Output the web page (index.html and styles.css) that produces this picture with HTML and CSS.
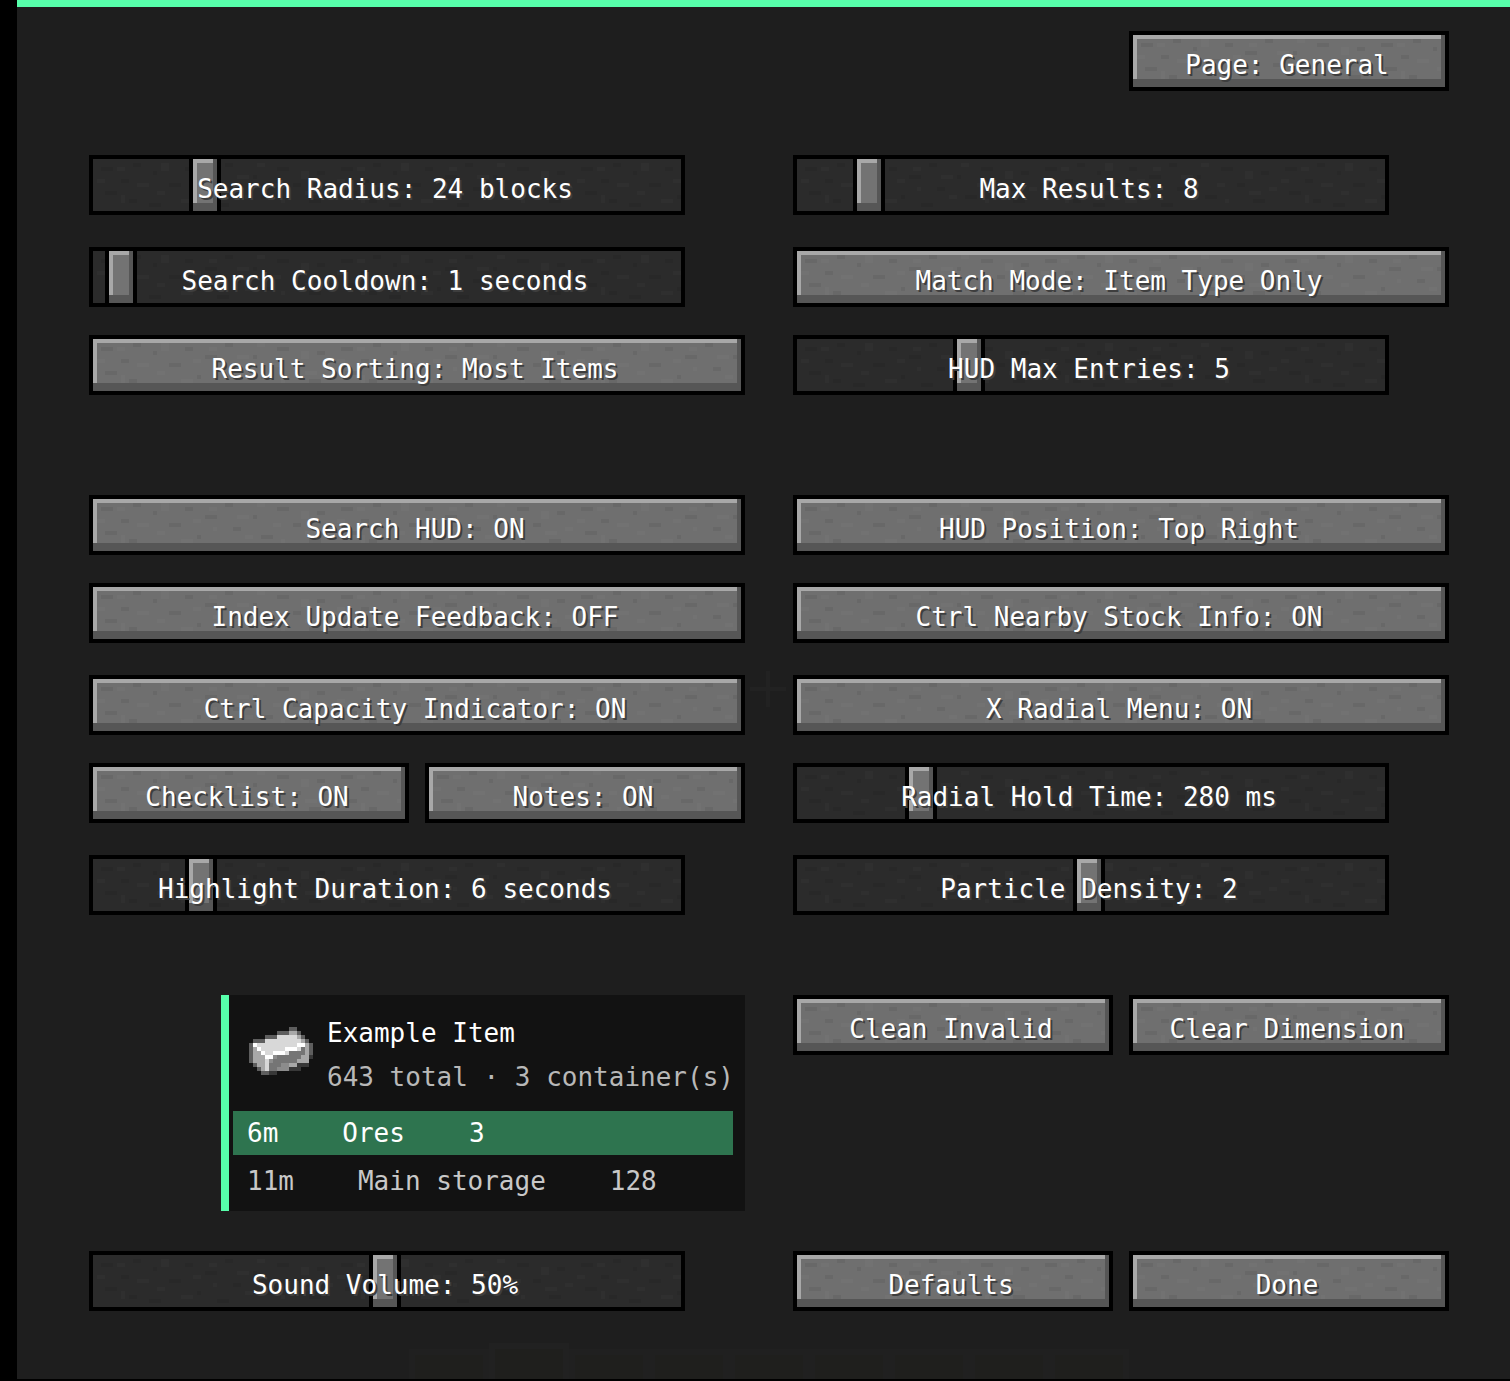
FILE: index.html
```html
<!DOCTYPE html>
<html lang="en">
<head>
<meta charset="utf-8">
<title>Settings</title>
<link rel="stylesheet" href="styles.css">
</head>
<body>
<main class="panel">
  <div class="crosshair" aria-hidden="true"></div>
  <div class="hotbar" aria-hidden="true"><i></i><i class="selected"></i><i></i><i></i><i></i><i></i><i></i><i></i><i></i></div>

  <header class="toolbar"><button class="btn" type="button">Page: General</button></header>

  <section class="group group-search">
    <div class="slider"><input type="range" id="radius" min="0" max="141" value="25" aria-valuetext="24 blocks"><label for="radius">Search Radius: 24 blocks</label></div>
    <div class="slider"><input type="range" id="results" min="0" max="141" value="15" aria-valuetext="8"><label for="results">Max Results: 8</label></div>
    <div class="slider"><input type="range" id="cooldown" min="0" max="141" value="4" aria-valuetext="1 seconds"><label for="cooldown">Search Cooldown: 1 seconds</label></div>
    <button class="btn" type="button">Match Mode: Item Type Only</button>
    <button class="btn" type="button">Result Sorting: Most Items</button>
    <div class="slider"><input type="range" id="entries" min="0" max="141" value="40" aria-valuetext="5"><label for="entries">HUD Max Entries: 5</label></div>
  </section>

  <section class="group group-display">
    <button class="btn" type="button">Search HUD: ON</button>
    <button class="btn" type="button">HUD Position: Top Right</button>
    <button class="btn" type="button">Index Update Feedback: OFF</button>
    <button class="btn" type="button">Ctrl Nearby Stock Info: ON</button>
    <button class="btn" type="button">Ctrl Capacity Indicator: ON</button>
    <button class="btn" type="button">X Radial Menu: ON</button>
    <div class="pair">
      <button class="btn" type="button">Checklist: ON</button>
      <button class="btn" type="button">Notes: ON</button>
    </div>
    <div class="slider"><input type="range" id="hold" min="0" max="141" value="28" aria-valuetext="280 ms"><label for="hold">Radial Hold Time: 280 ms</label></div>
    <div class="slider"><input type="range" id="highlight" min="0" max="141" value="24" aria-valuetext="6 seconds"><label for="highlight">Highlight Duration: 6 seconds</label></div>
    <div class="slider"><input type="range" id="density" min="0" max="141" value="70" aria-valuetext="2"><label for="density">Particle Density: 2</label></div>
  </section>

  <section class="group group-preview">
    <article class="preview">
      <div class="preview-head">
        <svg class="ingot" viewBox="0 0 16 12" shape-rendering="crispEdges" fill="none" aria-hidden="true">
          <path stroke="#5e5e5e" d="M10 .5h2M7 1.5h3M12 1.5h1M4 2.5h3M13 2.5h1M1 3.5h3M14 3.5h1M0 4.5h1M15 4.5h1M0 5.5h1M15 5.5h1M0 6.5h1M15 6.5h1M0 7.5h1M0 8.5h1M1 9.5h1M2 10.5h1M3 11.5h2"/>
          <path stroke="#383838" d="M15 7.5h1M12 9.5h3M10 10.5h3M5 11.5h2"/>
          <path stroke="#a8a8a8" d="M10 1.5h2M12 2.5h1M13 3.5h1M14 4.5h1M1 5.5h1M14 5.5h1M1 6.5h2M14 6.5h1M1 7.5h3M13 7.5h2M1 8.5h3M12 8.5h3M2 9.5h2M10 9.5h2M3 10.5h1"/>
          <path stroke="#d8d8d8" d="M7 2.5h5M4 3.5h9M2 4.5h10M3 5.5h6M12 5.5h1M4 6.5h2M9 6.5h1M4 8.5h1M4 9.5h1M4 10.5h1"/>
          <path stroke="#fff" d="M1 4.5h1M12 4.5h2M2 5.5h1M9 5.5h3M3 6.5h1M6 6.5h3M4 7.5h2"/>
          <path stroke="#757575" d="M13 5.5h1M10 6.5h4M7 7.5h6M6 8.5h6M5 9.5h5M5 10.5h2"/>
          <path stroke="#8c8c8c" d="M6 7.5h1M5 8.5h1M8 9.5h2M7 10.5h3"/>
        </svg>
        <div class="preview-text">
          <h2>Example Item</h2>
          <p>643 total · 3 container(s)</p>
        </div>
      </div>
      <ul class="places">
        <li class="place place-active"><span>6m</span><span>Ores</span><span>3</span></li>
        <li class="place"><span>11m</span><span>Main storage</span><span>128</span></li>
      </ul>
    </article>
    <div class="pair">
      <button class="btn" type="button">Clean Invalid</button>
      <button class="btn" type="button">Clear Dimension</button>
    </div>
  </section>

  <footer class="group">
    <div class="slider"><input type="range" id="volume" min="0" max="141" value="70" aria-valuetext="50%"><label for="volume">Sound Volume: 50%</label></div>
    <div class="pair">
      <button class="btn" type="button">Defaults</button>
      <button class="btn" type="button">Done</button>
    </div>
  </footer>
</main>
</body>
</html>
```
FILE: styles.css
```css
:root {
  --accent: #57ffab;
  --grain: url("data:image/svg+xml,%3Csvg xmlns='http://www.w3.org/2000/svg' width='240' height='52' shape-rendering='crispEdges'%3E%3Cpath fill='%23000' fill-opacity='.06' d='M8 8h12v4H8zM40 4h8v4h-8zM60 12h4v4h-4zM28 20h8v4h-8zM12 32h12v4H12zM36 40h8v4h-8zM56 44h12v4H56zM76 24h12v4H76zM92 8h8v4h-8zM112 16h12v4h-12zM104 36h4v4h-4zM132 4h8v4h-8zM140 28h8v4h-8zM124 44h12v4h-12zM160 16h4v4h-4zM168 36h12v4h-12zM184 8h12v4h-12zM200 24h8v4h-8zM216 40h12v4h-12zM224 12h8v4h-8z'/%3E%3Cpath fill='%23fff' fill-opacity='.02' d='M24 8h8v4h-8zM4 20h8v4H4zM44 24h12v4H44zM68 4h8v8h-8zM28 36h4v8h-4zM64 32h8v4h-8zM88 40h12v4H88zM100 20h8v4h-8zM120 28h4v4h-4zM116 8h8v4h-8zM144 16h12v4h-12zM152 36h8v4h-8zM164 4h8v4h-8zM180 24h8v4h-8zM188 40h4v4h-4zM208 12h8v8h-8zM212 32h12v4h-12zM232 28h8v4h-8z'/%3E%3C/svg%3E");
}

* { box-sizing: border-box; }

body {
  margin: 0;
  min-height: 100vh;
  padding: 0 0 2px 17px;
  display: flex;
  background: #000;
  color: #fff;
  font: 26px/32px "DejaVu Sans Mono", monospace;
}

.panel {
  position: relative;
  isolation: isolate;
  flex: 1;
  min-width: 0;
  padding: 24px 61px 68px 72px;
  border-top: 7px solid var(--accent);
  background: #1e1e1e;
}

/* Game HUD showing faintly through the panel */
.crosshair {
  position: absolute;
  z-index: -1;
  top: 664px;
  left: calc(50% - 14px);
  width: 36px;
  height: 36px;
  background:
    linear-gradient(#222, #222) center / 4px 36px no-repeat,
    linear-gradient(#222, #222) center / 36px 4px no-repeat;
}

.hotbar {
  position: absolute;
  z-index: -1;
  bottom: 0;
  left: 50%;
  display: flex;
  align-items: flex-end;
  width: 720px;
  margin-left: -355px;
}

.hotbar i {
  flex: 1;
  height: 30px;
  border: 6px solid #202020;
  border-bottom: 0;
  background: #1f1f1d;
}

.hotbar .selected { height: 36px; border-color: #212121; }

.toolbar {
  display: flex;
  justify-content: flex-end;
  margin-bottom: 64px;
}

.toolbar .btn { width: 320px; }

.group {
  display: grid;
  grid-template-columns: repeat(2, minmax(0, 1fr));
  column-gap: 48px;
  align-items: start;
}

.group-search { grid-template-rows: 92px 88px 60px; margin-bottom: 100px; }
.group-display { grid-template-rows: 88px 92px 88px 92px 60px; margin-bottom: 80px; }
.group-preview { margin-bottom: 40px; }

.pair {
  display: grid;
  grid-template-columns: repeat(2, minmax(0, 1fr));
  gap: 16px;
}

.btn {
  height: 60px;
  padding: 8px 4px 0 0;
  border: 4px solid #000;
  border-radius: 0;
  background: #6f6f6f var(--grain);
  box-shadow: inset 0 -8px #565656, inset -4px 0 #565656, inset 4px 4px #a8a8a8;
  color: inherit;
  font: inherit;
  white-space: nowrap;
  text-shadow: 2px 2px #3e3e3e;
}

.slider {
  display: grid;
  margin-right: 60px;
}

.slider > * { grid-area: 1 / 1; }

.slider label {
  z-index: 1;
  padding: 18px 4px 0 0;
  text-align: center;
  white-space: nowrap;
  text-shadow: 2px 2px #3e3e3e;
  pointer-events: none;
}

.slider input {
  appearance: none;
  width: 100%;
  height: 60px;
  margin: 0;
  background: var(--grain) 4px 4px, linear-gradient(#2b2b2b, #2b2b2b);
  box-shadow: inset 0 0 0 4px #000;
}

.slider input::-webkit-slider-thumb {
  appearance: none;
  width: 32px;
  height: 60px;
  border: 4px solid #000;
  background: #737373;
  box-shadow: inset 0 -8px #565656, inset -4px 0 #565656, inset 4px 4px #a8a8a8;
}

.preview {
  margin-left: 132px;
  padding: 20px 12px 8px 4px;
  border-left: 8px solid var(--accent);
  background: #121212;
}

.preview-head {
  display: flex;
  gap: 14px;
  padding: 2px 0 18px 16px;
}

.ingot {
  flex: none;
  width: 64px;
  height: 48px;
  margin-top: 10px;
  stroke-width: 1;
}

.preview h2, .preview p {
  margin: 0;
  font: inherit;
  white-space: nowrap;
}

.preview p { margin-top: 12px; color: #b8b8b8; }

.places {
  display: grid;
  gap: 4px;
  margin: 0;
  padding: 0;
  list-style: none;
}

.place {
  display: flex;
  gap: 64px;
  height: 44px;
  padding: 6px 14px;
  color: #c8c8c8;
}

.place-active { background: #2e744f; color: #fff; }
```
